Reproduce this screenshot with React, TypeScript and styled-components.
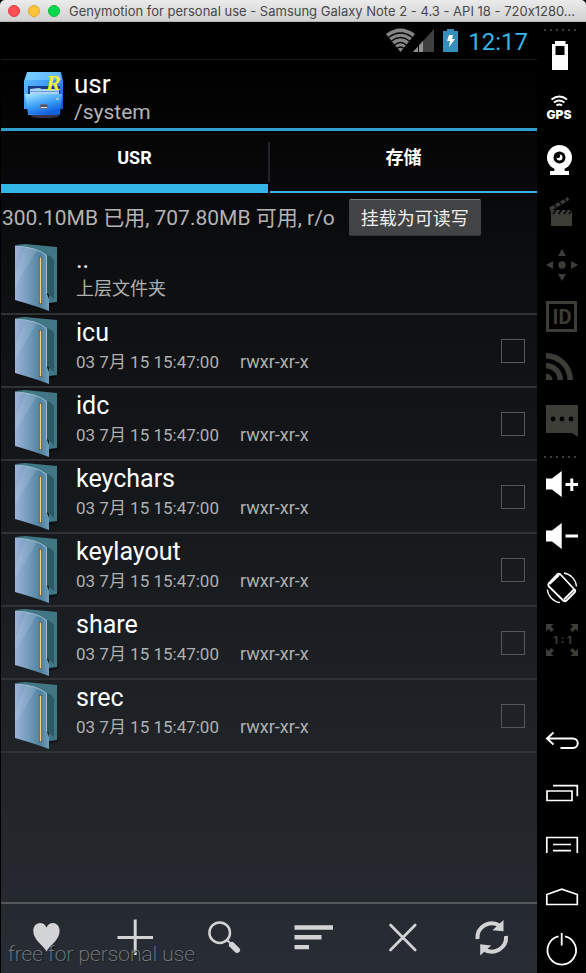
import React, { useState } from "react";
import styled, { createGlobalStyle } from "styled-components";

const GlobalStyle = createGlobalStyle`
  *, *::before, *::after { box-sizing: border-box; }
  body { margin: 0; background: #000; }
  button { font: inherit; color: inherit; border: 0; padding: 0; background: none; }
  ul { list-style: none; margin: 0; padding: 0; }
  h1, p { margin: 0; font-weight: 400; }
  svg { display: block; flex: none; }
`;

const Window = styled.div`
  min-height: 100vh;
  display: flex;
  flex-direction: column;
  background: #000;
  font-family: Roboto, "Noto Sans CJK SC", sans-serif;
  color: #fff;
`;

const TitleBar = styled.header`
  height: 22px;
  display: flex;
  align-items: center;
  padding: 0 8px;
  gap: 8px;
  background: linear-gradient(#ebebeb, #d2d2d2);
  border-bottom: 1px solid #b4b4b4;
  border-radius: 5px 5px 0 0;
`;

const Light = styled.button<{ $fill: string; $edge: string }>`
  width: 12px;
  height: 12px;
  flex: none;
  border-radius: 50%;
  background: ${(p) => p.$fill};
  border: 1px solid ${(p) => p.$edge};
`;

const WindowTitle = styled.div`
  flex: 1;
  min-width: 0;
  padding-left: 1px;
  font: 13px/20px Inter, sans-serif;
  font-feature-settings: "calt" 0;
  color: #484848;
  white-space: nowrap;
  overflow: hidden;
`;

const Body = styled.div`
  flex: 1;
  display: flex;
`;

const Screen = styled.main`
  position: relative;
  flex: 1;
  min-width: 0;
  margin-left: 1px;
  display: flex;
  flex-direction: column;
  background: linear-gradient(#000 4%, #0c0d0f 24%, #16191c 52%, #212529 80%, #282c34 100%);
`;

const StatusBar = styled.div`
  height: 38px;
  display: flex;
  align-items: center;
  justify-content: flex-end;
  padding-right: 9px;
  background: #000;
  border-bottom: 1px solid #181818;
`;

const Clock = styled.time`
  margin-left: 8px;
  padding-top: 2px;
  font-size: 24px;
  line-height: 36px;
  color: #33b5e5;
`;

const AppHeader = styled.div`
  height: 71px;
  display: flex;
  align-items: center;
  padding-left: 21px;
  gap: 8px;
  border-bottom: 3px solid #2f9fcb;
`;

const Titles = styled.div`
  padding-top: 5px;
`;

const Heading = styled.h1`
  font-size: 26px;
  line-height: 30px;
`;

const Path = styled.p`
  font-size: 21px;
  line-height: 26px;
  color: #b4b4b4;
`;

const Tabs = styled.div`
  height: 62px;
  display: flex;
`;

const Tab = styled.button<{ $active: boolean }>`
  flex: 1;
  display: flex;
  align-items: flex-start;
  justify-content: center;
  padding-top: 15px;
  font-size: 18px;
  line-height: 24px;
  font-weight: 700;
  border-bottom: ${(p) => (p.$active ? 9 : 2)}px solid #33b5e5;
`;

const TabDivider = styled.div`
  width: 2px;
  height: 40px;
  margin-top: 11px;
  background: #222326;
`;

const InfoRow = styled.div`
  height: 49px;
  display: flex;
  align-items: center;
  gap: 14px;
  padding-left: 1px;
  font-size: 21px;
  line-height: 28px;
  color: #b4b4b4;
  white-space: nowrap;
`;

const MountButton = styled.button`
  height: 37px;
  padding: 2px 12px 0;
  font-size: 18px;
  color: #f0f0f0;
  background: #424344;
  border-top: 1px solid #77797b;
  border-bottom: 1px solid #333;
  border-radius: 2px;
`;

const InfoText = styled.span``;

const FileRow = styled.li`
  height: 73px;
  display: flex;
  align-items: center;
  padding: 0 12px 0 13px;
  border-bottom: 2px solid #303235;
`;

const FileText = styled.label`
  flex: 1;
  padding: 0 0 9px 14px;
`;

const FileName = styled.div`
  font-size: 25px;
  line-height: 32px;
`;

const FileMeta = styled.div`
  display: flex;
  gap: 21px;
  font-size: 18px;
  line-height: 26px;
  color: #b0b0b0;
`;

const Modified = styled.span`
  font-size: 17px;
`;

const Check = styled.input`
  appearance: none;
  width: 24px;
  height: 24px;
  margin: 0;
  border: 1px solid #55585b;
  &:checked { background: #33b5e5; }
`;

const Toolbar = styled.nav`
  height: 71px;
  margin-top: auto;
  display: flex;
  align-items: center;
  border-top: 2px solid #54585b;
  padding-bottom: 1px;
  color: #d2d3d4;
`;

const Tool = styled.button`
  flex: 1;
  display: flex;
  justify-content: center;
`;

const Watermark = styled.div`
  position: absolute;
  left: 7px;
  bottom: 5px;
  font-size: 21px;
  line-height: 28px;
  font-weight: 200;
  color: #83868a;
  text-shadow: 1px 1px 0 #1b1d20;
  pointer-events: none;
`;

const Sidebar = styled.aside`
  width: 49px;
  display: flex;
  flex-direction: column;
  background: #000;
`;

const SideGroup = styled.div<{ $end?: boolean }>`
  display: flex;
  flex-direction: column;
  gap: 4px;
  margin-top: ${(p) => (p.$end ? "auto" : "0")};
`;

const SideButton = styled.button<{ $dim?: boolean }>`
  height: 48px;
  color: ${(p) => (p.$dim ? "#3d3d38" : "#fff")};
`;

const Dots = styled.div<{ $first?: boolean }>`
  display: flex;
  gap: 4px;
  padding: ${(p) => (p.$first ? "7px 0 0 7px" : "13px 0 3px 7px")};
  span { width: 2px; height: 2px; background: #3c3c3c; }
`;

const Definitions = styled.svg`
  position: absolute;
`;

function Svg({ children }: { children: React.ReactNode }) {
  return (
    <svg width="48" height="48" viewBox="0 0 48 48" fill="currentColor" aria-hidden="true">
      {children}
    </svg>
  );
}

const line = { fill: "none", stroke: "currentColor", strokeWidth: 2 };
const speaker = <path d="M9 17.500h6l9.700-7.500v26L15 28.500H9z" />;

const sensors = [
  { name: "Battery", art: <path fillRule="evenodd" d="M18 10h10.500v3H31v26H15V13h3zM18.500 15v9h9v-9z" /> },
  {
    name: "GPS",
    art: (
      <>
        <path {...line} d="M14.500 16.500q8-6 15.500 0M17 19.500q5-4 10.500 0M19.500 22.500q2.700-2 5.500 0" />
        <text x="22" y="35.500" textAnchor="middle" fontFamily="Inter" fontWeight="900" fontSize="12">GPS</text>
      </>
    ),
  },
  {
    name: "Camera",
    art: (
      <>
        <circle cx="22.500" cy="22.500" r="12.500" />
        <path d="M18 33h9l1 3h4v4H13v-4h4z" />
        <circle cx="22.500" cy="22.500" r="6" fill="#000" />
        <path d="M22.500 19.500a3 3 0 1 1-3 3 1.500 1.500 0 0 0 3-3z" />
      </>
    ),
  },
  {
    name: "Capture",
    dim: true,
    art: (
      <>
        <path d="M14 23h21v16H14z" />
        <path d="M12.300 20.500L31 10l1.200 3L13.500 24z" />
        <path stroke="#000" strokeWidth="1.400" d="M17 17l2 3.500M22 14l2 3.500M27 11l2 3.500M16 27l3-4M21.500 27l3-4M27 27l3-4M32 27l3-4" />
      </>
    ),
  },
  {
    name: "Remote control",
    dim: true,
    art: (
      <>
        <circle cx="25" cy="26" r="3.700" />
        <path d="M25 10l4 7h-8zM25 42l4-7h-8zM9 26l7-4v8zM41 26l-7-4v8z" />
      </>
    ),
  },
  {
    name: "Identifiers",
    dim: true,
    art: (
      <>
        <path {...line} strokeWidth="3" d="M10.500 11.500h28v28h-28z" />
        <text x="25" y="33" textAnchor="middle" fontFamily="Roboto" fontWeight="700" fontSize="20">ID</text>
      </>
    ),
  },
  {
    name: "Network",
    dim: true,
    art: (
      <path d="M9 30.500a6.500 6.500 0 0 1 6.500 6.500H9zM9 20a17 17 0 0 1 17 17h-5.500A11.500 11.500 0 0 0 9 25.500zM9 10a27 27 0 0 1 27 27h-5.500A21.500 21.500 0 0 0 9 15.500z" />
    ),
  },
  {
    name: "Phone",
    dim: true,
    art: (
      <>
        <path d="M9 10h32v32l-6-4H9z" />
        <path fill="#000" d="M13.700 24a2.400 2.400 0 1 1 4.800 0 2.400 2.400 0 0 1-4.800 0M22.600 24a2.400 2.400 0 1 1 4.800 0 2.400 2.400 0 0 1-4.800 0M31.700 24a2.400 2.400 0 1 1 4.800 0 2.400 2.400 0 0 1-4.800 0" />
      </>
    ),
  },
];

const controls = [
  { name: "Volume up", art: <>{speaker}<path {...line} strokeWidth="3" d="M28.500 23.500H41M34.800 17.500v12.500" /></> },
  { name: "Volume down", art: <>{speaker}<path {...line} strokeWidth="3" d="M28.500 23H41" /></> },
  {
    name: "Rotate screen",
    art: (
      <>
        <path {...line} strokeWidth="1.800" strokeLinejoin="round" d="M20 9.500q2-1.500 3.500 0l14 15q1.500 1.500 0 3l-8 8q-1.700 1.500-3.300 0L12 21.500q-1.500-1.700 0-3.500zM12.500 19l9.500-9M27 34.500l10-10M29 36l9-9" />
        <path {...line} strokeWidth="1.300" d="M27 8a15 15 0 0 1 12.500 13.500M10.300 24.500A15 15 0 0 0 23 37.700" />
      </>
    ),
  },
  {
    name: "Pixel perfect",
    dim: true,
    art: (
      <>
        <path d="M9 7h7.500l-2.500 2.500 3 3-2.500 2.500-3-3L9 14.500zM41 7h-7.500l2.500 2.500-3 3 2.500 2.500 3-3 2.500 2.500zM9 39v-7.500l2.500 2.500 3-3 2.500 2.500-3 3 2.500 2.500zM41 39v-7.500L38.500 34l-3-3-2.500 2.500 3 3-2.500 2.500z" />
        <text x="25.500" y="27" textAnchor="middle" fontFamily="Inter" fontWeight="700" fontSize="11">1 : 1</text>
      </>
    ),
  },
];

const keys = [
  { name: "Back", art: <path {...line} d="M16.500 15.500l-6.500 6 6.500 6M10 21.500h26a4.700 4.700 0 0 1 0 9.500H23.500" /> },
  { name: "Recent apps", art: <path {...line} strokeWidth="1.700" d="M10 22h25v9.500H10zM16 16.700h24.300v10.500" /> },
  { name: "Menu", art: <path {...line} strokeWidth="1.700" d="M9.800 32V16.500h30.500V32M16 23.500h18M16 29.700h18" /> },
  { name: "Home", art: <path {...line} strokeWidth="1.700" d="M9.800 31.500v-10l15-5.300 15.500 5.300v10z" /> },
  { name: "Power", art: <path {...line} strokeWidth="1.800" d="M24.700 8v12.500M21.500 11.300a14.300 14.300 0 1 0 6.500 0" /> },
];

const tools = [
  { name: "收藏", art: <path d="M24.500 37.500C21 31 11.300 26 11.300 17c0-9 10-10.500 13.200-3.500C27.700 6.500 37.600 8 37.600 17c0 9-9.600 14-13.100 20.500z" /> },
  { name: "新建", art: <path {...line} strokeWidth="3" d="M6.500 23.500H42M24.200 5.500V41" /> },
  {
    name: "搜索",
    art: (
      <>
        <circle {...line} strokeWidth="2.500" cx="19.700" cy="18.700" r="10.300" />
        <path {...line} d="M27 26l5 5" />
        <path {...line} strokeWidth="6" strokeLinecap="round" d="M32 31l5 5" />
      </>
    ),
  },
  { name: "排序", art: <path d="M4.500 11.300H43v4.500H4.500zM4.500 21h27v4.500h-27zM4.500 31H19v4.300H4.500z" /> },
  { name: "关闭", art: <path {...line} strokeWidth="2.700" strokeLinecap="round" d="M11.500 11l24.700 25M36.200 11L11.500 36" /> },
  {
    name: "刷新",
    art: (
      <>
        <path {...line} strokeWidth="4" d="M9.500 25A14.300 14.300 0 0 1 32 12M38 22A14.300 14.300 0 0 1 15.500 35" />
        <path d="M35.500 6v11.300l-11-1zM12.200 41.500V30.300l11 1.200z" />
      </>
    ),
  },
];

const modified = "03 7月 15 15:47:00";
const folders = ["icu", "idc", "keychars", "keylayout", "share", "srec"];

function FolderIcon() {
  return (
    <svg width="48" height="68" viewBox="0 0 48 68" aria-hidden="true">
      <path fill="#000" opacity=".35" d="M33 60l14-5-4 5-9 3z" />
      <path fill="#417684" d="M1 1l10-1 32 3v55l-8 1V12z" />
      <path fill="#2b5964" d="M33 11q6 2 7 6v38l-7-6z" />
      <path fill="url(#cover)" d="M1 2q22 1 32 9v39l2 5v12Q22 62 1 56z" />
      <path fill="#c3d2ec" opacity=".2" d="M1 30L12 3l11 3L1 42z" />
      <path fill="none" stroke="#a9c5dc" strokeWidth=".8" d="M1 2q22 1 31.500 9.500V50" />
      <path stroke="#493b2b" strokeWidth="3" d="M26.500 13v47" />
      <path stroke="#f2cf8b" strokeWidth="1.700" d="M26.500 13.500v46" />
    </svg>
  );
}

function CabinetIcon() {
  return (
    <svg width="44" height="48" viewBox="0 0 44 48" overflow="visible" aria-hidden="true">
      <defs>
        <linearGradient id="cabinet" x2="1" y2="1">
          <stop stopColor="#65c4ff" />
          <stop offset=".5" stopColor="#3a94f8" />
          <stop offset="1" stopColor="#0a47c8" />
        </linearGradient>
        <linearGradient id="drawer" x2=".5" y2="1">
          <stop stopColor="#a6eaff" />
          <stop offset=".6" stopColor="#389cf8" />
          <stop offset="1" stopColor="#1462dc" />
        </linearGradient>
      </defs>
      <ellipse cx="23" cy="46" rx="14" ry="2" fill="#35334a" />
      <path fill="url(#cabinet)" d="M5 2h34l2 9v28h-3v6H6v-6H2V11z" />
      <path fill="#8adcff" d="M6 2h32l2 8H3z" opacity=".5" />
      <path fill="#173a85" d="M6 16h32v8H6z" />
      <path fill="#a9d4f8" d="M8 19l9-1 3 1h17v6H8z" />
      <path fill="#6f9fdc" d="M8 21h29v1H8z" />
      <path fill="url(#drawer)" d="M3 24h37l-2 20H6z" />
      <path fill="#e7ebf2" stroke="#666985" d="M18.500 34.500h7v4h-7z" />
      <path fill="#51506a" d="M19 35h6v2h-6z" />
      <circle cx="35.500" cy="29" r="1.300" fill="#b8c4d2" />
      <text x="24" y="20" fontFamily="Liberation Serif" fontStyle="italic" fontWeight="700" fontSize="22" fill="#f6f12a">R</text>
    </svg>
  );
}

function StatusIcons() {
  return (
    <svg width="74" height="26" viewBox="0 0 74 26" aria-hidden="true">
      <path fill="#858585" d="M0 6Q14.500-5 29 6L14.500 24z" />
      <path fill="none" stroke="#000" strokeWidth="1.300" d="M2.500 9.500q12-9 24 0M5.500 13q9-7 18 0M8.500 17q6-5 12 0M11 20.500q3.500-3 7 0" />
      <path fill="#404040" d="M27 24L48 1v23z" />
      <path fill="#929292" d="M27 24l10-11v11z" />
      <path stroke="#000" d="M32.500 5v19" />
      <path fill="#3490b8" d="M57 3h4V1h7v2h4v21H57z" />
      <path fill="#fff" d="M63 7h4l-1 4h3l-6 8 1-6h-3z" />
    </svg>
  );
}

function SideButtons({ items }: { items: { name: string; dim?: boolean; art: React.ReactNode }[] }) {
  return (
    <>
      {items.map((item) => (
        <SideButton key={item.name} type="button" aria-label={item.name} $dim={item.dim}>
          <Svg>{item.art}</Svg>
        </SideButton>
      ))}
    </>
  );
}

function DotDivider({ first }: { first?: boolean }) {
  return (
    <Dots $first={first}>
      {[0, 1, 2, 3, 4, 5].map((n) => <span key={n} />)}
    </Dots>
  );
}

export default function App() {
  const [tab, setTab] = useState(0);
  return (
    <Window>
      <GlobalStyle />
      <Definitions width="0" height="0" aria-hidden="true">
        <linearGradient id="cover">
          <stop stopColor="#9db3d8" />
          <stop offset=".45" stopColor="#6d98b8" />
          <stop offset=".75" stopColor="#4f829c" />
          <stop offset="1" stopColor="#6d9dbd" />
        </linearGradient>
      </Definitions>
      <TitleBar>
        <Light type="button" aria-label="Close" $fill="#fc4e55" $edge="#e03c43" />
        <Light type="button" aria-label="Minimize" $fill="#fcc438" $edge="#dfa62d" />
        <Light type="button" aria-label="Zoom" $fill="#09d94c" $edge="#14b83a" />
        <WindowTitle>Genymotion for personal use - Samsung Galaxy Note 2 - 4.3 - API 18 - 720x1280...</WindowTitle>
      </TitleBar>
      <Body>
        <Screen>
          <StatusBar>
            <StatusIcons />
            <Clock>12:17</Clock>
          </StatusBar>
          <AppHeader>
            <CabinetIcon />
            <Titles>
              <Heading>usr</Heading>
              <Path>/system</Path>
            </Titles>
          </AppHeader>
          <Tabs role="tablist">
            <Tab type="button" role="tab" aria-selected={tab === 0} $active={tab === 0} onClick={() => setTab(0)}>USR</Tab>
            <TabDivider />
            <Tab type="button" role="tab" aria-selected={tab === 1} $active={tab === 1} onClick={() => setTab(1)}>存储</Tab>
          </Tabs>
          <InfoRow>
            <InfoText>300.10MB 已用, 707.80MB 可用, r/o</InfoText>
            <MountButton type="button">挂载为可读写</MountButton>
          </InfoRow>
          <ul>
            <FileRow>
              <FolderIcon />
              <FileText as="div">
                <FileName>..</FileName>
                <FileMeta>上层文件夹</FileMeta>
              </FileText>
            </FileRow>
            {folders.map((name) => (
              <FileRow key={name}>
                <FolderIcon />
                <FileText htmlFor={name}>
                  <FileName>{name}</FileName>
                  <FileMeta>
                    <Modified>{modified}</Modified>
                    <span>rwxr-xr-x</span>
                  </FileMeta>
                </FileText>
                <Check type="checkbox" id={name} />
              </FileRow>
            ))}
          </ul>
          <Toolbar>
            {tools.map((tool) => (
              <Tool key={tool.name} type="button" aria-label={tool.name}>
                <Svg>{tool.art}</Svg>
              </Tool>
            ))}
          </Toolbar>
          <Watermark>free for personal use</Watermark>
        </Screen>
        <Sidebar>
          <DotDivider first />
          <SideGroup><SideButtons items={sensors} /></SideGroup>
          <DotDivider />
          <SideGroup><SideButtons items={controls} /></SideGroup>
          <SideGroup $end><SideButtons items={keys} /></SideGroup>
        </Sidebar>
      </Body>
    </Window>
  );
}
